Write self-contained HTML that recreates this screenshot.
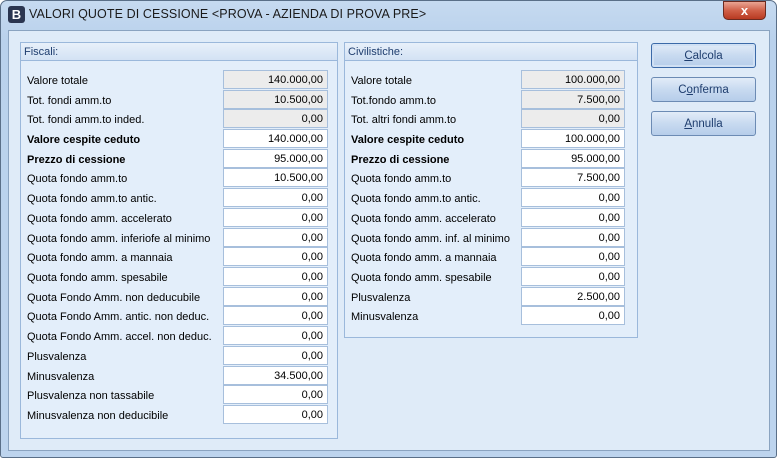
<!DOCTYPE html>
<html><head><meta charset="utf-8"><style>
*{margin:0;padding:0;box-sizing:border-box}
body{width:777px;height:458px;overflow:hidden;font-family:"Liberation Sans","DejaVu Sans",sans-serif;font-size:11px;color:#000;background:#fff}
.frame{position:absolute;left:0;top:0;width:777px;height:458px;border:1px solid #5a6f88;border-radius:7px 7px 3px 3px;background:linear-gradient(#c6daf0,#b9d1ec 40px,#bdd4ee)}
.title{position:absolute;left:29px;top:7px;font-size:12.5px;color:#1a1a1a;letter-spacing:0.1px}
.logo{position:absolute;left:8px;top:6px;width:17px;height:17px;background:#2a3550;border-radius:3px;color:#fff;font-weight:bold;font-size:13px;text-align:center;line-height:17px}
.close{position:absolute;left:723px;top:1px;width:43px;height:19px;border:1px solid #6b2a20;border-radius:0 0 5px 5px;background:linear-gradient(#e9a594,#d06048 50%,#b83a22);color:#fff;text-align:center;font-weight:bold;font-size:13px;line-height:17px}
.client{position:absolute;left:8px;top:30px;width:762px;height:421px;background:#dfebf8;border:1px solid #8aa3c0}
.grp{position:absolute;border:1px solid #9bb8db;background:#e3eefa}
.gh{height:18px;background:linear-gradient(#e8f0fa,#d3e2f4);border-bottom:1px solid #9bb8db;color:#1e3d6e;padding-left:3px;line-height:18px;font-size:11px}
.l{position:absolute;font-size:11px;line-height:14px;margin-top:1px}
.b{font-weight:bold}
.i{position:absolute;height:19px;border:1px solid #a7bfdc;background:#fff;text-align:right;padding-right:4px;line-height:18px;font-size:11px}
.g{background:#ececec}
.btn{position:absolute;left:651px;width:105px;height:25px;border:1px solid #6c8bb4;border-radius:3px;background:linear-gradient(#e2ecf8,#c8daf0 50%,#b6cdea);text-align:center;line-height:24px;color:#1e3d6e;font-size:11.5px}
.btn u{text-decoration:underline}
</style></head><body>
<div class="frame"></div>
<div class="logo">B</div>
<div class="title">VALORI QUOTE DI CESSIONE &lt;PROVA - AZIENDA DI PROVA PRE&gt;</div>
<div class="close">x</div>
<div class="client"></div>

<div class="grp" style="left:20px;top:42px;width:318px;height:397px"><div class="gh">Fiscali:</div></div>
<div class="grp" style="left:344px;top:42px;width:294px;height:296px"><div class="gh">Civilistiche:</div></div>

<div class="l" style="left:27px;top:73px">Valore totale</div><div class="i g" style="left:223px;top:70px;width:105px">140.000,00</div>
<div class="l" style="left:27px;top:93px">Tot. fondi amm.to</div><div class="i g" style="left:223px;top:90px;width:105px">10.500,00</div>
<div class="l" style="left:27px;top:112px">Tot. fondi amm.to inded.</div><div class="i g" style="left:223px;top:109px;width:105px">0,00</div>
<div class="l b" style="left:27px;top:132px">Valore cespite ceduto</div><div class="i" style="left:223px;top:129px;width:105px">140.000,00</div>
<div class="l b" style="left:27px;top:152px">Prezzo di cessione</div><div class="i" style="left:223px;top:149px;width:105px">95.000,00</div>
<div class="l" style="left:27px;top:171px">Quota fondo amm.to</div><div class="i" style="left:223px;top:168px;width:105px">10.500,00</div>
<div class="l" style="left:27px;top:191px">Quota fondo amm.to antic.</div><div class="i" style="left:223px;top:188px;width:105px">0,00</div>
<div class="l" style="left:27px;top:211px">Quota fondo amm. accelerato</div><div class="i" style="left:223px;top:208px;width:105px">0,00</div>
<div class="l" style="left:27px;top:231px">Quota fondo amm. inferiofe al minimo</div><div class="i" style="left:223px;top:228px;width:105px">0,00</div>
<div class="l" style="left:27px;top:250px">Quota fondo amm. a mannaia</div><div class="i" style="left:223px;top:247px;width:105px">0,00</div>
<div class="l" style="left:27px;top:270px">Quota fondo amm. spesabile</div><div class="i" style="left:223px;top:267px;width:105px">0,00</div>
<div class="l" style="left:27px;top:290px">Quota Fondo Amm. non deducubile</div><div class="i" style="left:223px;top:287px;width:105px">0,00</div>
<div class="l" style="left:27px;top:309px">Quota Fondo Amm. antic. non deduc.</div><div class="i" style="left:223px;top:306px;width:105px">0,00</div>
<div class="l" style="left:27px;top:329px">Quota Fondo Amm. accel. non deduc.</div><div class="i" style="left:223px;top:326px;width:105px">0,00</div>
<div class="l" style="left:27px;top:349px">Plusvalenza</div><div class="i" style="left:223px;top:346px;width:105px">0,00</div>
<div class="l" style="left:27px;top:369px">Minusvalenza</div><div class="i" style="left:223px;top:366px;width:105px">34.500,00</div>
<div class="l" style="left:27px;top:388px">Plusvalenza non tassabile</div><div class="i" style="left:223px;top:385px;width:105px">0,00</div>
<div class="l" style="left:27px;top:408px">Minusvalenza non deducibile</div><div class="i" style="left:223px;top:405px;width:105px">0,00</div>

<div class="l" style="left:351px;top:73px">Valore totale</div><div class="i g" style="left:521px;top:70px;width:104px">100.000,00</div>
<div class="l" style="left:351px;top:93px">Tot.fondo amm.to</div><div class="i g" style="left:521px;top:90px;width:104px">7.500,00</div>
<div class="l" style="left:351px;top:112px">Tot. altri fondi amm.to</div><div class="i g" style="left:521px;top:109px;width:104px">0,00</div>
<div class="l b" style="left:351px;top:132px">Valore cespite ceduto</div><div class="i" style="left:521px;top:129px;width:104px">100.000,00</div>
<div class="l b" style="left:351px;top:152px">Prezzo di cessione</div><div class="i" style="left:521px;top:149px;width:104px">95.000,00</div>
<div class="l" style="left:351px;top:171px">Quota fondo amm.to</div><div class="i" style="left:521px;top:168px;width:104px">7.500,00</div>
<div class="l" style="left:351px;top:191px">Quota fondo amm.to antic.</div><div class="i" style="left:521px;top:188px;width:104px">0,00</div>
<div class="l" style="left:351px;top:211px">Quota fondo amm. accelerato</div><div class="i" style="left:521px;top:208px;width:104px">0,00</div>
<div class="l" style="left:351px;top:231px">Quota fondo amm. inf. al minimo</div><div class="i" style="left:521px;top:228px;width:104px">0,00</div>
<div class="l" style="left:351px;top:250px">Quota fondo amm. a mannaia</div><div class="i" style="left:521px;top:247px;width:104px">0,00</div>
<div class="l" style="left:351px;top:270px">Quota fondo amm. spesabile</div><div class="i" style="left:521px;top:267px;width:104px">0,00</div>
<div class="l" style="left:351px;top:290px">Plusvalenza</div><div class="i" style="left:521px;top:287px;width:104px">2.500,00</div>
<div class="l" style="left:351px;top:309px">Minusvalenza</div><div class="i" style="left:521px;top:306px;width:104px">0,00</div>

<div class="btn" style="top:43px;border-color:#3c6aa8;box-shadow:inset 0 0 0 2px #d0e0f4"><u>C</u>alcola</div>
<div class="btn" style="top:77px">C<u>o</u>nferma</div>
<div class="btn" style="top:111px"><u>A</u>nnulla</div>
</body></html>
